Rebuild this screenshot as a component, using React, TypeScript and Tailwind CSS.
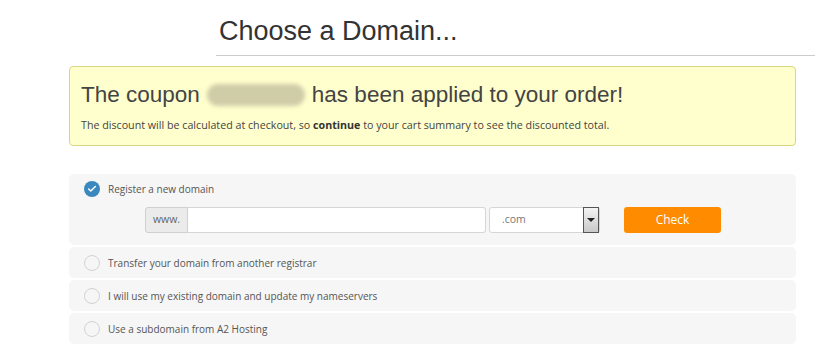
import { Check } from 'lucide-react';

const options = [
  'Transfer your domain from another registrar',
  'I will use my existing domain and update my nameservers',
  'Use a subdomain from A2 Hosting',
];

export default function App() {
  return (
    <div className="min-h-[363px] w-[815px] bg-white font-['Open_Sans',sans-serif] text-[#555]">
      {/* Heading */}
      <div className="ml-[216px] border-b border-[#cccccc] pt-[16px] pb-[8px] pl-[3px]">
        <h1 className="font-['Liberation_Sans',Arial,sans-serif] text-[27px] leading-[31px] text-[#333]">
          Choose a Domain...
        </h1>
      </div>

      {/* Coupon notice */}
      <div className="mt-[10px] ml-[69px] mr-[19px] rounded-[4px] border border-[#d8d883] bg-[#ffffcd] px-[11px] pt-[14px] pb-[13px]">
        <div className="flex items-center font-['Liberation_Sans',Arial,sans-serif] text-[22.5px] leading-[28px] text-[#444]">
          <span>The coupon</span>
          <span className="mx-[7px] inline-block h-[22px] w-[98px] rounded-full bg-[#cfcca8] blur-[2px]" />
          <span>has been applied to your order!</span>
        </div>
        <p className="mt-[9px] text-[10.7px] leading-[14px] text-[#444]">
          The discount will be calculated at checkout, so <b className="font-bold text-[#333]">continue</b> to
          your cart summary to see the discounted total.
        </p>
      </div>

      {/* Domain options */}
      <div className="mt-[28px] ml-[69px] mr-[19px] flex flex-col gap-[2px]">
        <div className="rounded-[5px] bg-[#f6f6f6] pt-[7px] pb-[12px] pl-[15px]">
          <div className="flex items-center gap-[8px]">
            <span className="flex h-[16px] w-[16px] items-center justify-center rounded-full bg-[#3a88bd]">
              <Check className="h-[10px] w-[10px] text-white" strokeWidth={3.5} />
            </span>
            <span className="text-[10px] leading-[16px] text-[#555]">Register a new domain</span>
          </div>
          <div className="mt-[10px] ml-[61px] flex items-center">
            <div className="flex h-[26px] w-[43px] items-center justify-center rounded-l-[3px] border border-[#d0d0d0] bg-[#ebebeb] text-[10.5px] text-[#666]">
              www.
            </div>
            <div className="h-[26px] w-[298px] rounded-r-[3px] border border-l-0 border-[#d6d6d6] bg-white" />
            <div className="ml-[3px] flex h-[26px] w-[111px] items-center justify-between rounded-[3px] border border-[#d6d6d6] bg-white">
              <span className="pl-[12px] text-[10.5px] text-[#777]">.com</span>
              <span className="flex h-[26px] w-[16px] items-center justify-center border border-[#555] bg-gradient-to-b from-[#f4f4f4] to-[#c9c9c9]">
                <span className="h-0 w-0 border-x-[4px] border-t-[4px] border-x-transparent border-t-[#222]" />
              </span>
            </div>
            <button className="ml-[24px] flex h-[26px] w-[97px] items-center justify-center rounded-[3px] bg-[#ff8c00] text-[12px] text-white">
              Check
            </button>
          </div>
        </div>

        {options.map((label) => (
          <div key={label} className="flex h-[31px] items-center gap-[8px] rounded-[5px] bg-[#f6f6f6] pl-[15px]">
            <span className="h-[16px] w-[16px] rounded-full border border-[#d2d2d2]" />
            <span className="text-[10px] leading-[16px] text-[#555]">{label}</span>
          </div>
        ))}
      </div>
    </div>
  );
}
